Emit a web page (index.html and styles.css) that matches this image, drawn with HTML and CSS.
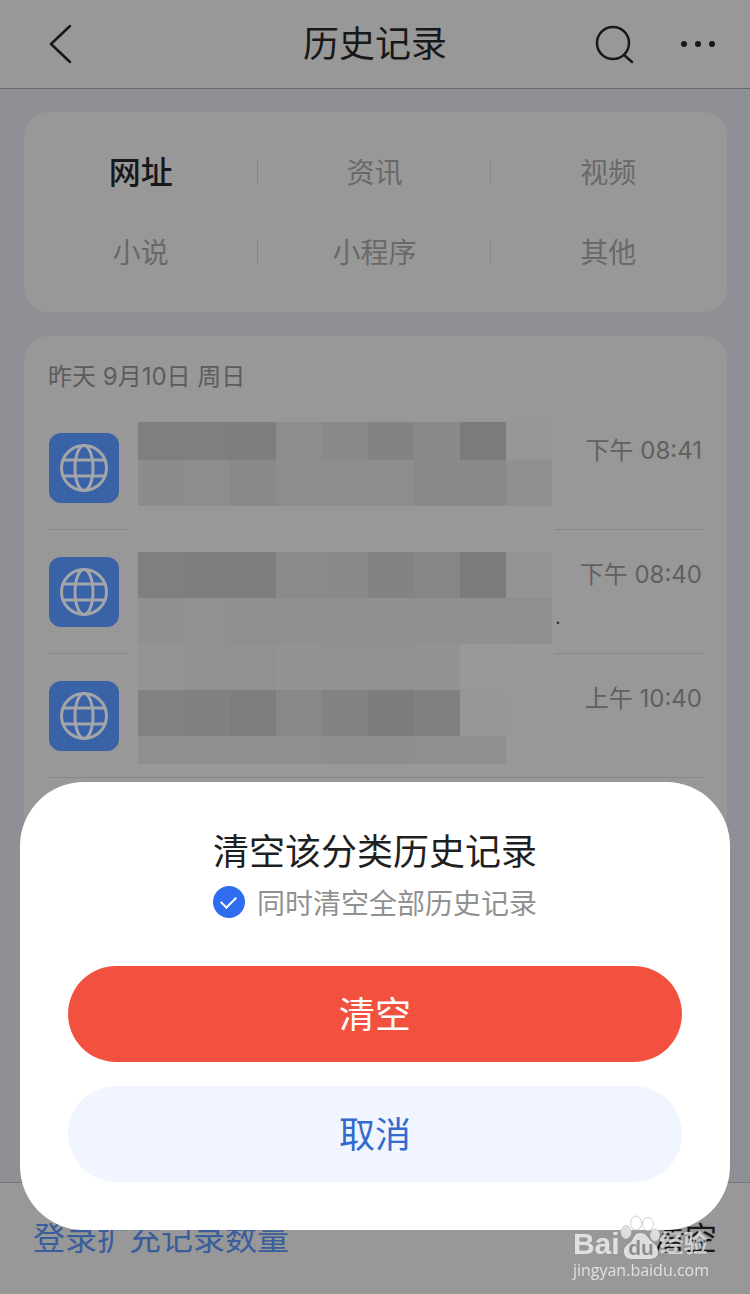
FILE: index.html
```html
<!DOCTYPE html>
<html lang="zh-CN">
<head>
<meta charset="utf-8">
<meta name="viewport" content="width=device-width, initial-scale=1">
<title>历史记录</title>
<link rel="stylesheet" href="styles.css">
</head>
<body>
<svg class="defs" aria-hidden="true">
  <symbol id="globe" viewBox="0 0 70 70">
    <g fill="none" stroke="currentColor" stroke-width="3">
      <circle cx="35" cy="35" r="22.500"/>
      <ellipse cx="35" cy="35" rx="9" ry="22.500"/>
      <path d="M14 27h42M14 43h42"/>
    </g>
  </symbol>
</svg>
<div class="page">
  <header class="header">
    <button class="icon-button" type="button" aria-label="返回">
      <svg width="28" height="44" viewBox="0 0 28 44"><path d="M25 4 6 22l19 18" fill="none" stroke="currentColor" stroke-width="2.500" stroke-linecap="round" stroke-linejoin="round"/></svg>
    </button>
    <h1 class="header-title">历史记录</h1>
    <div class="header-actions">
      <button class="icon-button" type="button" aria-label="搜索">
        <svg width="44" height="44" viewBox="0 0 44 44"><g fill="none" stroke="currentColor" stroke-width="2.500" stroke-linecap="round"><circle cx="19" cy="21" r="16"/><path d="m30 33 8 7"/></g></svg>
      </button>
      <button class="icon-button" type="button" aria-label="更多">
        <svg width="40" height="44" viewBox="0 0 40 44"><g fill="currentColor"><circle cx="6" cy="22" r="3"/><circle cx="20" cy="22" r="3"/><circle cx="34" cy="22" r="3"/></g></svg>
      </button>
    </div>
  </header>
  <main class="content">
    <nav class="card tabs">
      <button class="tab tab-active" type="button">网址</button>
      <button class="tab" type="button">资讯</button>
      <button class="tab" type="button">视频</button>
      <button class="tab" type="button">小说</button>
      <button class="tab" type="button">小程序</button>
      <button class="tab" type="button">其他</button>
    </nav>
    <section class="card history">
      <h2 class="date">昨天 9月10日 周日</h2>
      <ul class="list">
        <li class="item">
          <div class="cell"><svg class="site-icon"><use href="#globe"/></svg></div>
          <div class="mosaic mosaic-first"><div class="strip strip-a"></div><div class="strip strip-b"></div></div>
          <div class="cell info"><time>下午 08:41</time></div>
        </li>
        <li class="item">
          <div class="cell"><svg class="site-icon"><use href="#globe"/></svg></div>
          <div class="mosaic mosaic-second"><div class="strip strip-c"></div><div class="strip strip-d"></div><div class="strip strip-e strip-cut"></div></div>
          <div class="cell info"><time>下午 08:40</time><span class="rest">.</span></div>
        </li>
        <li class="item item-last">
          <div class="cell"><svg class="site-icon"><use href="#globe"/></svg></div>
          <div class="mosaic"><div class="strip strip-e"></div><div class="strip strip-f"></div><div class="strip strip-g"></div></div>
          <div class="cell info"><time>上午 10:40</time></div>
        </li>
      </ul>
    </section>
  </main>
  <footer class="footer">
    <a class="login" href="#">登录扩充记录数量</a>
    <button class="clear" type="button">清空</button>
  </footer>
</div>

<div class="overlay">
  <div class="dialog" role="dialog" aria-labelledby="dialog-title">
    <h2 class="dialog-title" id="dialog-title">清空该分类历史记录</h2>
    <label class="option" for="all"><input class="check" id="all" type="checkbox" checked>同时清空全部历史记录</label>
    <button class="action action-danger" type="button">清空</button>
    <button class="action action-cancel" type="button">取消</button>
  </div>
</div>

<div class="watermark">
  <div class="brand">
    <span>Bai</span>
    <svg class="paw" width="40" height="46" viewBox="0 0 40 46">
      <g fill="#dedede" stroke="#cfcfcf" stroke-width="1">
        <ellipse cx="6" cy="18" rx="5" ry="6.500"/>
        <ellipse cx="16" cy="9" rx="5.500" ry="7" fill="#fff"/>
        <ellipse cx="28" cy="10" rx="5.500" ry="6.500" fill="#fff"/>
        <ellipse cx="35" cy="21" rx="4.500" ry="6"/>
        <path stroke="none" d="M20 19c7 0 8 6 12 9 5 4 6 6 6 10 0 5-4 7-9 7H13c-6 0-9-2-9-8 0-4 3-6 7-9 3-3 3-9 9-9z"/>
      </g>
      <text x="21" y="41" text-anchor="middle" class="paw-text">du</text>
    </svg>
    <span class="brand-cn">经验</span>
  </div>
  <div class="domain">jingyan.baidu.com</div>
</div>
</body>
</html>
```
FILE: styles.css
```css
:root {
  --surface: #989898;
  --backdrop: #8f9095;
  --ink: #181818;
  --muted: #696969;
  --line: #888;
}

* {
  box-sizing: border-box;
}

body {
  margin: 0;
  background: var(--backdrop);
  color: var(--ink);
  font-family: Inter, "Noto Sans CJK SC", sans-serif;
}

button {
  padding: 0;
  border: 0;
  background: none;
  color: inherit;
  font: inherit;
}

h1,
h2,
ul {
  margin: 0;
  padding: 0;
  font-weight: 400;
  list-style: none;
}

svg {
  display: block;
}

.defs {
  display: none;
}

.page {
  display: flex;
  flex-direction: column;
  height: 100vh;
  overflow: hidden;
}

.header {
  display: grid;
  grid-template-columns: 1fr auto 1fr;
  align-items: center;
  flex: none;
  height: 89px;
  padding: 0 32px 0 45px;
  border-bottom: 1px solid #65656a;
  background: var(--surface);
}

.header-title {
  padding-right: 13px;
  font-size: 36px;
  line-height: 48px;
}

.header-actions {
  display: flex;
  justify-content: flex-end;
  gap: 40px;
}

.icon-button {
  justify-self: start;
}

.content {
  flex: 1;
  display: flex;
  flex-direction: column;
  gap: 24px;
  min-height: 0;
  padding: 23px 23px 0 24px;
  overflow: hidden;
}

.card {
  flex: none;
  border-radius: 24px;
  background: var(--surface);
}

.tabs {
  display: grid;
  grid-template-columns: repeat(3, 1fr);
  padding: 20px 2px 20px 0;
}

.tab {
  height: 80px;
  padding-bottom: 2px;
  color: var(--muted);
  font-size: 28px;
  background: linear-gradient(#858585, #858585) right center / 1px 26px no-repeat;
}

.tab:nth-child(3n) {
  background: none;
}

.tab-active {
  padding-bottom: 4px;
  color: var(--ink);
  font-size: 32px;
  font-weight: 500;
}

.history {
  flex: 1;
  padding: 12px 22px 0 24px;
}

.date {
  height: 58px;
  color: #5c5c5c;
  font-size: 24px;
  line-height: 58px;
}

.item {
  display: grid;
  grid-template-columns: 80px 1fr 150px;
  height: 124px;
}

.cell {
  border-bottom: 1px solid var(--line);
}

.item-last {
  border-bottom: 1px solid var(--line);
}

.item-last .cell {
  border: 0;
}

.site-icon {
  width: 70px;
  height: 70px;
  margin: 27px 0 0 1px;
  border-radius: 12px;
  background: #3a62a6;
  color: #a2a5aa;
}

.mosaic {
  padding-left: 10px;
}

.mosaic-first {
  padding-top: 16px;
}

.mosaic-second {
  padding-top: 22px;
}

.strip {
  width: 414px;
  max-width: 100%;
  height: 46px;
}

.strip-a {
  height: 38px;
  background: linear-gradient(90deg, #7f7f7f 0 92px, #7e7e7e 0 138px, #8d8d8d 0 184px, #8a8a8a 0 230px, #838383 0 276px, #8a8a8a 0 322px, #7b7b7b 0 368px, #969696 0);
}

.strip-b {
  background: linear-gradient(90deg, #8c8c8c 0 46px, #8d8d8d 0 92px, #898989 0 138px, #8d8d8d 0 276px, #898989 0 368px, #909090 0);
}

.strip-c {
  background: linear-gradient(90deg, #7f7f7f 0 46px, #7d7d7d 0 138px, #8b8b8b 0 184px, #8a8a8a 0 230px, #838383 0 276px, #868686 0 322px, #7b7b7b 0 368px, #949494 0);
}

.strip-d {
  background: linear-gradient(90deg, #909090 0 46px, #919191 0 92px, #8f8f8f 0 138px, #909090 0 368px, #8f8f8f 0);
}

.strip-e {
  height: 36px;
  background: linear-gradient(90deg, #949494 0 46px, #919191 0 138px, #939393 0 184px, #919191 0 276px, #939393 0 322px, transparent 0);
}

.strip-cut {
  height: 10px;
}

.strip-f {
  background: linear-gradient(90deg, #828282 0 46px, #818181 0 92px, #7e7e7e 0 138px, #888 0 184px, #828282 0 230px, #7c7c7c 0 276px, #808080 0 322px, #969696 0 368px, transparent 0);
}

.strip-g {
  height: 28px;
  background: linear-gradient(90deg, #8f8f8f 0 184px, #8e8e8e 0 276px, #8f8f8f 0 368px, transparent 0);
}

.info {
  display: flex;
  flex-direction: column;
  align-items: flex-end;
  justify-content: space-between;
  padding: 29px 3px 26px 0;
  color: #606060;
  font-size: 24px;
  line-height: 32px;
}

.rest {
  align-self: flex-start;
  color: #333;
  font-size: 20px;
  line-height: 20px;
}

.footer {
  display: flex;
  flex: none;
  align-items: center;
  justify-content: space-between;
  height: 112px;
  padding: 0 33px 6px;
  border-top: 1px solid #777;
  background: var(--surface);
  font-size: 32px;
}

.login {
  color: #3a5d9c;
  text-decoration: none;
}

.overlay {
  position: fixed;
  inset: 0;
  display: flex;
  align-items: flex-end;
  padding: 0 20px 64px;
}

.dialog {
  display: flex;
  flex: 1;
  flex-direction: column;
  align-items: center;
  padding: 46px 48px 48px;
  border-radius: 64px;
  background: #fff;
}

.dialog-title {
  color: #1f1f1f;
  font-size: 36px;
  line-height: 48px;
}

.option {
  display: flex;
  align-items: center;
  gap: 12px;
  height: 52px;
  margin-bottom: 38px;
  color: #919191;
  font-size: 28px;
}

.check {
  display: grid;
  place-items: center;
  width: 32px;
  height: 32px;
  margin: 0;
  border-radius: 50%;
  background: #2e6cf0;
  appearance: none;
}

.check::before {
  content: "";
  width: 13px;
  height: 7px;
  margin-bottom: 4px;
  border: solid #fff;
  border-width: 0 0 2px 2px;
  transform: rotate(-45deg);
}

.action {
  width: 100%;
  height: 96px;
  padding-bottom: 4px;
  border-radius: 48px;
  font-size: 36px;
}

.action-danger {
  margin-bottom: 24px;
  background: #f2513f;
  color: #fff;
}

.action-cancel {
  background: #f0f5ff;
  color: #316bcd;
}

.watermark {
  position: absolute;
  right: 41px;
  bottom: 14px;
  color: #e0e0e0;
  font-family: "Open Sans", "Noto Sans CJK SC", sans-serif;
}

.brand {
  display: flex;
  align-items: flex-end;
  height: 32px;
  font-family: "Liberation Sans", "Noto Sans CJK SC", sans-serif;
  font-size: 30px;
  font-weight: 700;
  line-height: 32px;
}

.paw {
  flex: none;
}

.paw-text {
  fill: #8c8c8c;
  font-size: 21px;
}

.brand-cn {
  font-size: 24px;
  opacity: 0.8;
}

.domain {
  font-size: 16px;
  line-height: 20px;
}
```
